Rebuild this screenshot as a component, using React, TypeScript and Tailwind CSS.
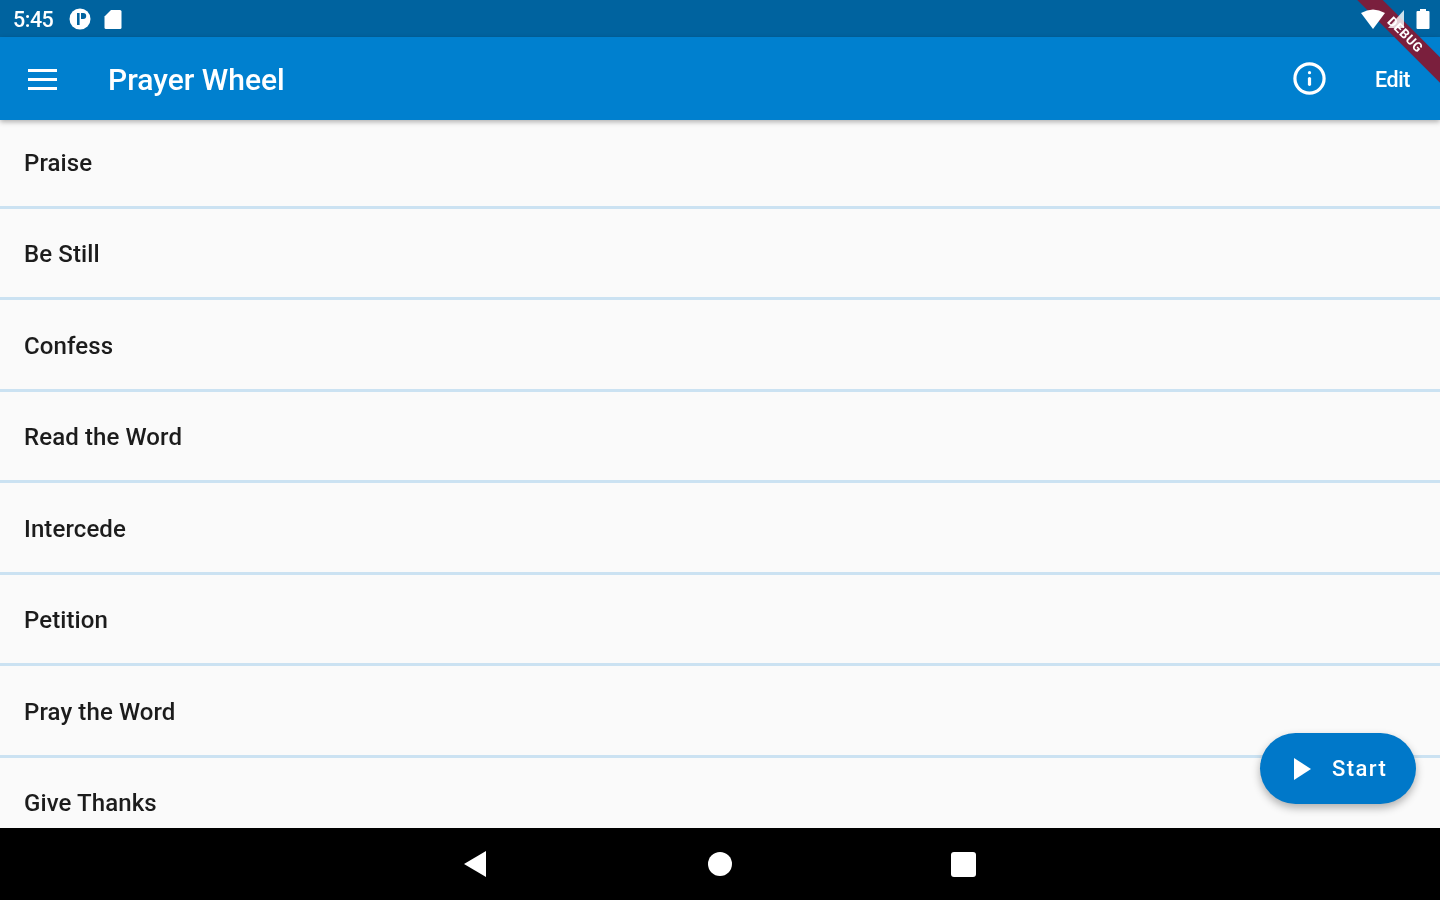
import { Info } from "lucide-react";

const ITEMS = ["Praise", "Be Still", "Confess", "Read the Word", "Intercede", "Petition", "Pray the Word", "Give Thanks"];

function StatusBar() {
  return (
    <div className="flex h-[37px] shrink-0 items-center bg-[#00639f] pl-[13px] pr-[10px] text-white">
      <span className="pt-[2px] text-[21.5px] font-medium leading-none tracking-[-0.5px]">5:45</span>
      <svg className="ml-[16px]" width="22" height="22" viewBox="0 0 22 22">
        <circle cx="11" cy="11" r="10.5" fill="#fff" />
        <path d="M8 5v12h2.6V5z M12 5h2.2a3 3 0 0 1 0 6H12z" fill="#00639f" />
      </svg>
      <svg className="ml-[13px]" width="18" height="20" viewBox="0 0 18 20">
        <path d="M7 1h9a1.5 1.5 0 0 1 1.5 1.5v16A1.5 1.5 0 0 1 16 20H2a1.5 1.5 0 0 1-1.5-1.5V7.5z" fill="#fff" />
      </svg>
      {/* icons sit above the debug ribbon */}
      <div className="relative z-30 ml-auto flex items-center">
        <svg width="24" height="20" viewBox="0 0 24 20">
          <path d="M0 4 Q12 -3 24 4 L12 20z" fill="#fff" />
        </svg>
        <svg width="18" height="20" viewBox="0 0 18 20" className="ml-[2px]">
          <path d="M17 1v18H1z" fill="#fff" fillOpacity="0.8" />
        </svg>
        <svg width="14" height="20" viewBox="0 0 14 20" className="ml-[11px]">
          <path d="M4 0h6v2h2.5a1 1 0 0 1 1 1v16a1 1 0 0 1-1 1h-11a1 1 0 0 1-1-1V3a1 1 0 0 1 1-1H4z" fill="#fff" />
        </svg>
      </div>
    </div>
  );
}

function AppBar() {
  return (
    <div className="relative z-10 flex h-[83px] shrink-0 items-center bg-[#0080cf] pl-[28px] pr-[30px] text-white shadow-[0_2px_5px_rgba(0,0,0,0.3)]">
      <svg width="29" height="22" viewBox="0 0 29 22">
        <path d="M0 1h29v3H0z M0 10h29v3H0z M0 19h29v3H0z" fill="#fff" />
      </svg>
      <span className="ml-[51px] pt-[2px] text-[30px] font-medium">Prayer Wheel</span>
      <Info size={35} strokeWidth={2.2} className="ml-auto" />
      <span className="ml-[48px] pt-[3px] text-[21.5px] font-medium tracking-[-0.4px]">Edit</span>
    </div>
  );
}

function Row({ label }: { label: string }) {
  return (
    <div className="flex h-[91.5px] shrink-0 items-center border-b-[3px] border-[#cbe2f2] pl-[24px] pt-[3px] text-[24px] font-medium tracking-[0.1px] text-[#1c1c1c]">
      {label}
    </div>
  );
}

export default function App() {
  return (
    <div className="relative flex h-[900px] w-[1440px] flex-col overflow-hidden bg-[#fafafa] font-['Roboto',sans-serif] blur-[0.6px]">
      <StatusBar />
      <AppBar />
      <div className="min-h-0 flex-1 overflow-hidden">
        <div className="-mt-[3px]">
          {ITEMS.map((item) => (
            <Row key={item} label={item} />
          ))}
        </div>
      </div>
      {/* bottom nav */}
      <div className="grid h-[72px] shrink-0 grid-cols-3 items-center justify-items-center bg-black px-[355px]">
        <svg width="24" height="28" viewBox="0 0 24 28" className="-translate-x-[1px]">
          <path d="M22 1v26L0 14z" fill="#fff" />
        </svg>
        <div className="size-[24px] rounded-full bg-white" />
        <div className="size-[25px] rounded-[3px] bg-white" />
      </div>
      {/* FAB */}
      <div className="absolute left-[1260px] top-[733px] flex h-[71px] w-[156px] items-center rounded-full bg-[#0078c9] pl-[32px] text-white shadow-[0_4px_8px_rgba(0,0,0,0.3)]">
        <svg width="20" height="24" viewBox="0 0 20 24">
          <path d="M2 1l17 11L2 23z" fill="#fff" />
        </svg>
        <span className="ml-[20px] text-[22px] font-medium tracking-[1.4px]">Start</span>
      </div>
      {/* debug banner */}
      <div className="absolute left-[1330px] top-[26px] z-20 flex h-[18px] w-[150px] rotate-45 items-center justify-center bg-[#7a1f3d] text-[13px] font-bold tracking-[0.5px] text-white">
        DEBUG
      </div>
    </div>
  );
}
